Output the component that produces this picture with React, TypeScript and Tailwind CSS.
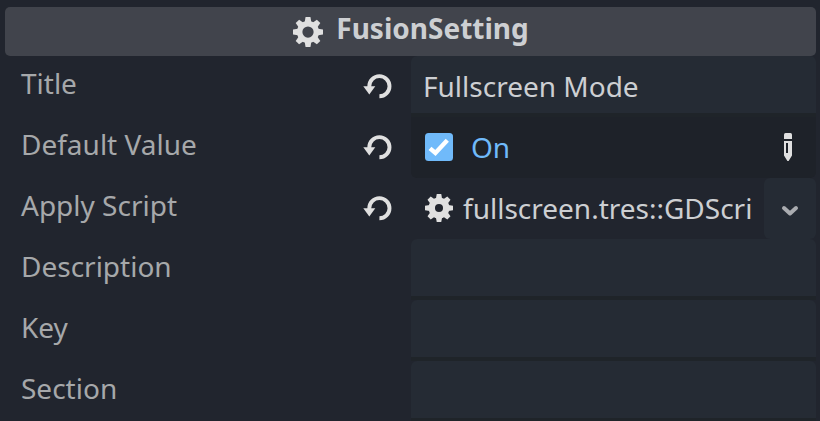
import type { ReactNode } from "react";

function Gear({ size, body, hole, className = "" }: { size: number; body: number; hole: number; className?: string }) {
  return (
    <svg width={size} height={size} viewBox="-16 -16 32 32" fill="#e0e0e0" className={"shrink-0 " + className}>
      <path
        fillRule="evenodd"
        d={`M0 ${-body}A${body} ${body} 0 1 1 0 ${body}A${body} ${body} 0 1 1 0 ${-body}ZM0 ${-hole}A${hole} ${hole} 0 1 0 0 ${hole}A${hole} ${hole} 0 1 0 0 ${-hole}Z`}
      />
      {[0, 45, 90, 135, 180, 225, 270, 315].map((a) => (
        <path key={a} d="M-2.6 -16H2.6L3.8 -9H-3.8Z" transform={`rotate(${a})`} />
      ))}
    </svg>
  );
}

function Revert() {
  return (
    <svg width="32" height="32" viewBox="0 0 32 32" fill="none" className="mb-[1px] shrink-0">
      <path d="M8.3 17.5V16.2A10.1 10.1 0 1 1 18.4 26.3" stroke="#e0e0e0" strokeWidth="3.9" />
      <path d="M2.3 16.2H14.3L8.3 24.5Z" fill="#e0e0e0" />
    </svg>
  );
}

function Pencil() {
  return (
    <svg width="8" height="28" viewBox="0 0 8 28" fill="#e0e0e0" className="mb-[1px] shrink-0">
      <path d="M0 6V1.5Q0 0 1.5 0H6.5Q8 0 8 1.5V6Z" />
      <path fillRule="evenodd" d="M0 8H8V22.5L4.6 28H3.4L0 22.5ZM2 10V20H4V10Z" />
    </svg>
  );
}

function Row({ label, revert = false, children }: { label: string; revert?: boolean; children: ReactNode }) {
  return (
    <div className="flex h-[61px] shrink-0">
      <div className="flex w-[406px] items-center pl-4 pr-[18px]">
        <span className="flex-1 whitespace-nowrap pb-[6px] text-[#a6a8aa]">{label}</span>
        {revert && <Revert />}
      </div>
      <div className="w-[405px]">{children}</div>
    </div>
  );
}

function TextField({ value = "" }: { value?: string }) {
  return (
    <div className="h-[61px] bg-[#1f2429]">
      <div className="bg-[#21252e]">
        <div className="h-[57px] rounded-t-[6px] bg-[#252b34] pl-3 leading-[61px]">{value}</div>
      </div>
    </div>
  );
}

export default function App() {
  return (
    <div className="h-[421px] w-[820px] overflow-hidden bg-[#21252e] pl-[5px] pr-1 pt-[7px] font-['Noto_Sans',sans-serif] text-[28px] leading-[61px] text-[#cdcfd2]">
      <div className="flex h-[49px] items-center justify-center gap-[13px] rounded-[5px] bg-[#41444c] pl-px">
        <Gear size={30} body={11.8} hole={6} className="mt-px" />
        <span className="pb-[6px] font-bold leading-[43px]">FusionSetting</span>
      </div>
      <Row label="Title" revert>
        <TextField value="Fullscreen Mode" />
      </Row>
      <Row label="Default Value" revert>
        <div className="flex h-[61px] items-center rounded-b-[6px] bg-[#1e2229] pl-[14px] pr-6 text-[#70bafa]">
          <svg width="28" height="28" viewBox="0 0 28 28" fill="none" className="mb-[1px] mr-[18px] shrink-0">
            <rect width="28" height="28" rx="3.5" fill="#70bafa" />
            <path d="M5 15.3L10.4 20L22.3 7.2" stroke="white" strokeWidth="4.4" />
          </svg>
          <span className="flex-1">On</span>
          <Pencil />
        </div>
      </Row>
      <Row label="Apply Script" revert>
        <div className="flex h-[61px] items-center pl-[14px]">
          <Gear size={28} body={12} hole={4.6} className="mb-px mr-[10px]" />
          <span className="flex-1 whitespace-nowrap">fullscreen.tres::GDScri</span>
          <div className="flex h-[61px] w-[52px] items-center justify-center rounded-[6px] bg-[#252b34]">
            <svg width="20" height="14" viewBox="0 0 20 14" fill="none" className="mt-[5px]">
              <path d="M4 4L10 9.5L16 4" stroke="#aaacb0" strokeWidth="4" strokeLinecap="round" strokeLinejoin="round" />
            </svg>
          </div>
        </div>
      </Row>
      <Row label="Description">
        <TextField />
      </Row>
      <Row label="Key">
        <TextField />
      </Row>
      <Row label="Section">
        <TextField />
      </Row>
    </div>
  );
}
